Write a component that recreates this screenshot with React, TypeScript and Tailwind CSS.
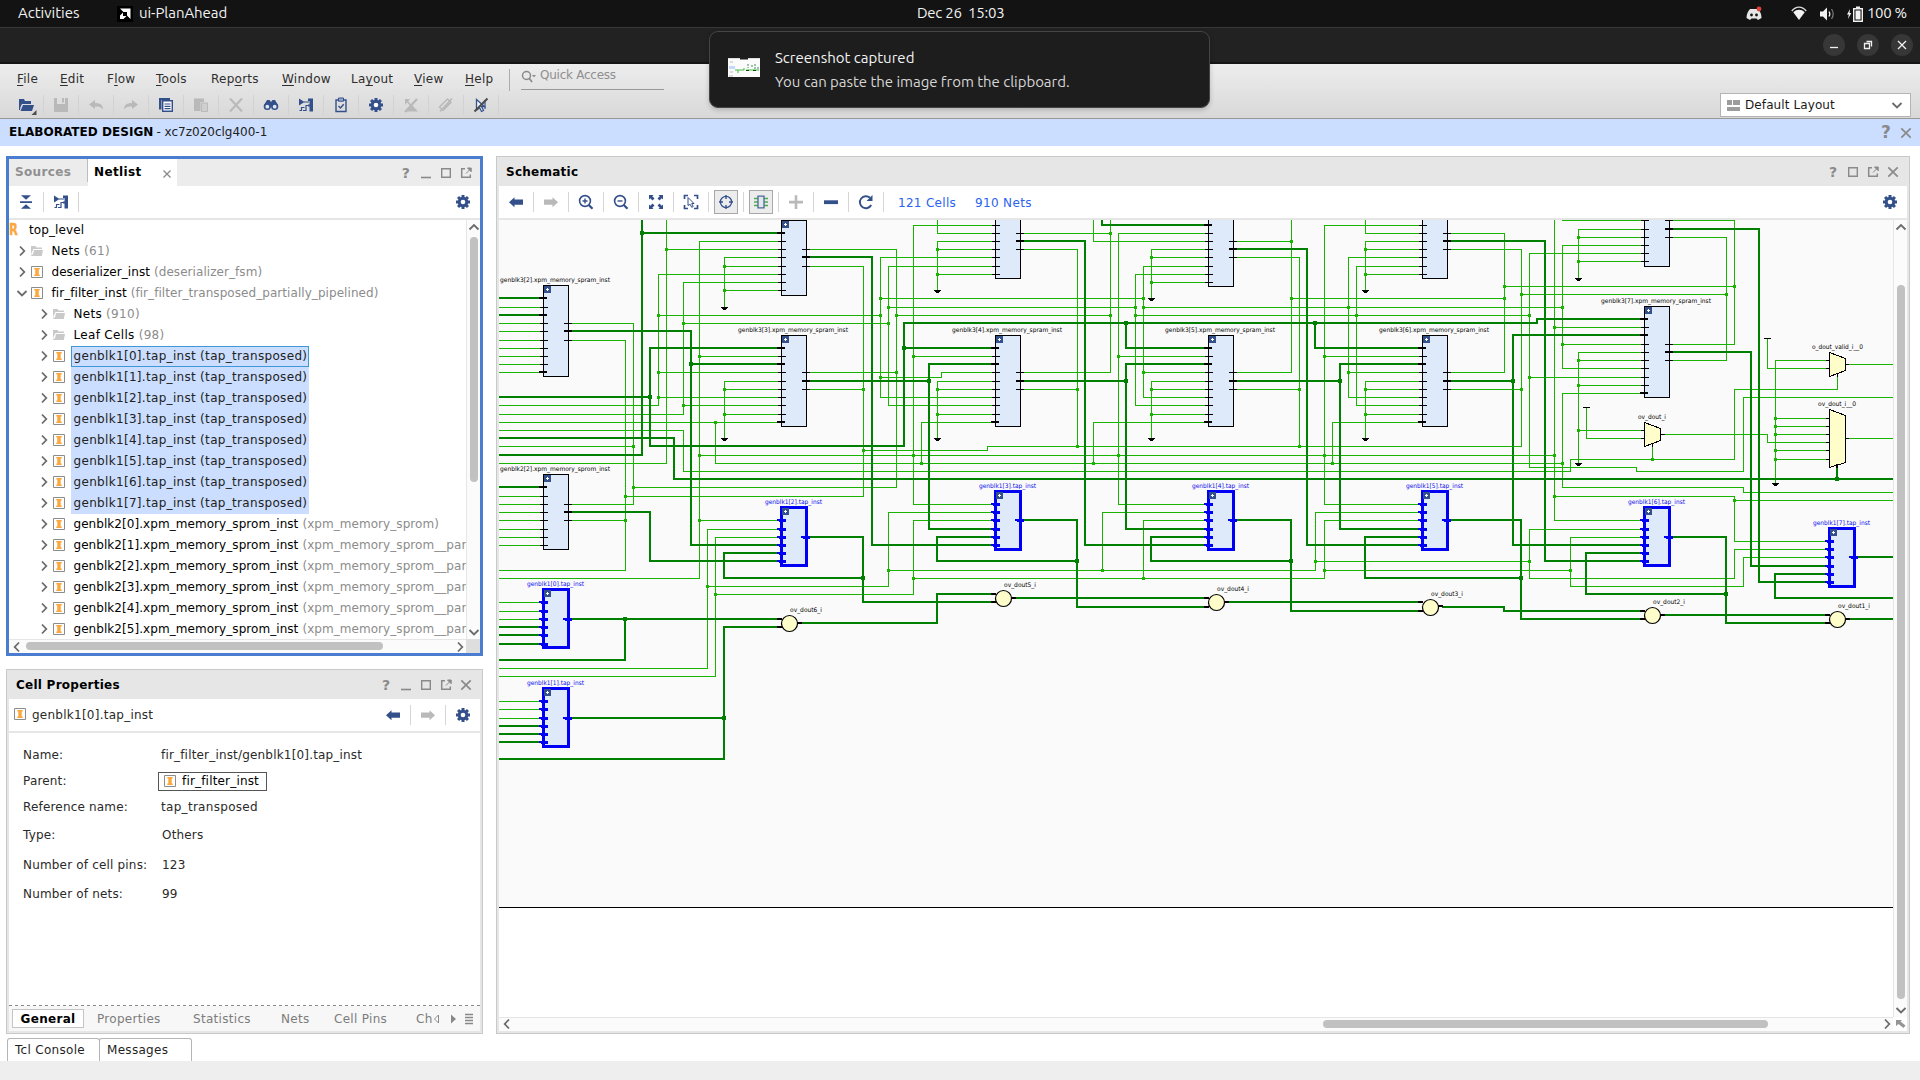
import React from "react";

const NAVY = "#34508a";
const OFF = "#b9b9b9";

type IconProps = { color?: string; className?: string };

function Svg({ children, className = "" }: { children: React.ReactNode; className?: string }) {
  return (
    <svg width="16" height="16" viewBox="0 0 16 16" className={"shrink-0 " + className}>
      {children}
    </svg>
  );
}

/* ---------- toolbar icons ---------- */

const FolderOpen = () => (
  <svg width="20" height="18" viewBox="0 0 20 18" className="ml-[3px] mt-1 shrink-0">
    <path d="M1 1h5l1 2h6v3H4L2.500 9 2 12H1z" fill={NAVY} />
    <path d="M5 7h11l-2 6H2.500z" fill={NAVY} />
    <path d="M18.500 12v5h-5z" fill="#4d4d4d" />
  </svg>
);
const Save = () => (
  <Svg>
    <path d="M1 1h3v6h8V1h3v14H1z" fill={OFF} />
    <path d="M9 1h2v4.500H9z" fill={OFF} />
  </Svg>
);
const Undo = ({ flip = false }: { flip?: boolean }) => (
  <Svg className={flip ? "-scale-x-100" : ""}>
    <path d="M1 7.500 7 3v3c5 0 8 2 8 6.500C13 10 11 9.500 7 9.500V12z" fill={OFF} />
  </Svg>
);
const Copy = () => (
  <Svg>
    <path d="M1 1h11v2H3.500v9.500H1z" fill={NAVY} />
    <path d="M4.700 3.700h9.600v10.600H4.700z" fill="#fff" stroke={NAVY} strokeWidth="1.400" />
    <path d="M6.500 7h6M6.500 9.300h6M6.500 11.600h6" stroke={NAVY} strokeWidth="1.200" />
  </Svg>
);
const Paste = () => (
  <Svg>
    <path d="M1 1.500h10V5H7.500v9H1z" fill={OFF} />
    <path d="M8.500 6h6v8.500h-6z" fill="#cfcfcf" stroke={OFF} strokeWidth="1" />
  </Svg>
);
const Cross = ({ color = OFF, className }: IconProps) => (
  <Svg className={className}>
    <path d="M2 1.500 14 14.500M14 1.500 2 14.500" stroke={color} strokeWidth="2" />
  </Svg>
);
const Binoculars = () => (
  <Svg>
    <path d="M4 3h2.500L8 5l1.500-2H12l3 5v2H1V8z" fill={NAVY} />
    <circle cx="4.300" cy="9.500" r="3.600" fill={NAVY} />
    <circle cx="11.700" cy="9.500" r="3.600" fill={NAVY} />
    <circle cx="4.300" cy="9.700" r="1.900" fill="#dfe6f2" />
    <circle cx="11.700" cy="9.700" r="1.900" fill="#dfe6f2" />
  </Svg>
);
const Tree = () => (
  <Svg>
    <path d="M1 1.500 6.500 5 1 8.500z" fill={NAVY} />
    <path d="M6 5h5M1.500 13.500h2v-3h3M10 8.500H8v5H5" stroke={NAVY} strokeWidth="1.200" fill="none" />
    <path d="M11.500 1.500H15v13h-3.500v-5H10v-2h1.500V4H10V1.500z" fill={NAVY} />
  </Svg>
);
const Clipboard = () => (
  <Svg>
    <path d="M3 3h10v11.500H3z" fill="none" stroke={NAVY} strokeWidth="1.400" />
    <path d="M5.500 1h5v3.200h-5z" fill="#9aabca" stroke={NAVY} strokeWidth="1" />
    <path d="m5.500 9 2 2 3.200-3.800" fill="none" stroke={NAVY} strokeWidth="1.400" />
  </Svg>
);
const Gear = () => (
  <Svg>
    <g fill={NAVY}>
      <circle cx="8" cy="8" r="5.300" />
      <path d="M6.500 1h3v14h-3zM1 6.500h14v3H1z" />
      <path d="M6.500 1h3v14h-3zM1 6.500h14v3H1z" transform="rotate(45 8 8)" />
    </g>
    <circle cx="8" cy="8" r="2.300" fill="#fff" />
  </Svg>
);
const NoSelect = () => (
  <Svg>
    <path d="M2 2h5L2 8zM2 14.500h13L9 8z" fill={OFF} />
    <path d="M14 2 2 15" stroke={OFF} strokeWidth="2.200" />
    <path d="m4 4 6 7" stroke={OFF} strokeWidth="1.500" />
  </Svg>
);
const NoMark = () => (
  <Svg>
    <path d="m1.500 10 8-8 3 3-8 8zM5 13.500l8.500-8.500" fill="none" stroke={OFF} strokeWidth="1.400" />
    <path d="M14 1.500 2 14.500" stroke={OFF} strokeWidth="1.600" />
  </Svg>
);
const NoCursor = () => (
  <Svg>
    <path d="m3.500 2.500 8 7H8.500l2 4-2 1-2-4-3 2z" fill="#eef2f8" stroke={NAVY} strokeWidth="1.300" />
    <path d="M12 3v9M4 13l2-2" stroke={NAVY} strokeWidth="1.200" />
    <path d="M14.500 1.500 1.500 14.500" stroke="#4b4b4b" strokeWidth="2" />
  </Svg>
);
const Collapse = () => (
  <Svg>
    <path d="M3 1.200h10L8 5.800zM3 14.800h10L8 10.200zM2 7.200h12v1.700H2z" fill={NAVY} />
  </Svg>
);
const ArrowIcon = ({ right = false }: { right?: boolean }) => (
  <Svg className={right ? "-scale-x-100" : ""}>
    <path d="M1 8.200 6.500 3.200v2.300H15v5.200H6.500v2.500z" fill={right ? OFF : NAVY} />
  </Svg>
);
const Zoom = ({ plus = false }: { plus?: boolean }) => (
  <Svg>
    <circle cx="7" cy="7" r="5.400" fill="#fff" stroke={NAVY} strokeWidth="1.600" />
    <path d={plus ? "M4.500 7h5M7 4.500v5" : "M4.500 7h5"} stroke={NAVY} strokeWidth="1.400" />
    <path d="m10.800 11 3.700 3.700" stroke={NAVY} strokeWidth="2.200" />
  </Svg>
);
const Fit = () => (
  <Svg>
    <path d="M1 1h4.500L4.300 2.200 6.500 4.500 4.500 6.500 2.300 4.300 1 5.500zM15 1v4.500l-1.300-1.200-2.200 2.200-2-2 2.200-2.300L10.500 1zM1 15v-4.500l1.300 1.200 2.200-2.200 2 2-2.200 2.300L5.500 15zM15 15h-4.500l1.200-1.200-2.200-2.300 2-2 2.200 2.200 1.300-1.200z" fill={NAVY} />
  </Svg>
);
const SelectArea = () => (
  <Svg>
    <path d="M1.500 5V1.500H5M11 1.500h3.500V5M14.500 11v3.500H11M5 14.500H1.500V11" fill="none" stroke={NAVY} strokeWidth="1.700" />
    <path d="m5 3.500 6 6H8.700l1.500 3-1.500.8-1.500-3L5 11.500z" fill="#fff" stroke={NAVY} strokeWidth="1" />
  </Svg>
);
const Target = () => (
  <Svg>
    <circle cx="8" cy="8" r="5.600" fill="none" stroke={NAVY} strokeWidth="1.300" />
    <path d="M8 1v4M8 11v4M1 8h4M11 8h4" stroke={NAVY} strokeWidth="1.400" />
  </Svg>
);
const Chip = () => (
  <Svg>
    <path d="M1 4.500h14M1 8h14M1 11.500h14" stroke="#47b04b" strokeWidth="1.700" />
    <path d="M5 2.200h6v11.600H5z" fill="#e3e8f0" stroke="#4f6796" strokeWidth="1.300" />
  </Svg>
);
const Plus = () => (
  <Svg>
    <path d="M1 6.800h14v2.600H1zM6.700 1.200h2.600V15H6.700z" fill={OFF} />
  </Svg>
);
const Minus = () => (
  <Svg>
    <path d="M1 6.300h14v3.800H1z" fill={NAVY} />
  </Svg>
);
const Refresh = () => (
  <Svg>
    <path d="M13.200 11A6 6 0 1 1 12 3.800" fill="none" stroke={NAVY} strokeWidth="1.900" />
    <path d="M14.500 1v6H8.500z" fill={NAVY} />
  </Svg>
);

/* ---------- window controls ---------- */

const HelpMark = ({ big = false }: { big?: boolean }) => (
  <span className={"w-5 text-center font-bold leading-none text-[#8a8a8a] " + (big ? "text-[17px]" : "text-[14px]")}>?</span>
);
const MinMark = () => (
  <svg width="20" height="12" viewBox="0 0 20 12"><path d="M5 10.500h10" stroke="#8a8a8a" strokeWidth="1.600" /></svg>
);
const MaxMark = () => (
  <svg width="20" height="12" viewBox="0 0 20 12"><path d="M5.700 1.700h8.600v8.600H5.700z" fill="none" stroke="#8a8a8a" strokeWidth="1.400" /></svg>
);
const PopMark = () => (
  <svg width="20" height="12" viewBox="0 0 20 12">
    <path d="M9 1.700H5.700v8.600h8.600V7.500" fill="none" stroke="#8a8a8a" strokeWidth="1.500" />
    <path d="M11.500 1h3.700v3.700zM10 6.500 14 2.500" stroke="#8a8a8a" strokeWidth="1" fill="#8a8a8a" />
  </svg>
);
const CloseMark = () => (
  <svg width="20" height="12" viewBox="0 0 20 12"><path d="m5.300 1.300 9.400 9.400M14.700 1.300l-9.400 9.400" stroke="#8a8a8a" strokeWidth="1.700" /></svg>
);
const Chevron = ({ dir, className = "" }: { dir: "up" | "down" | "left" | "right"; className?: string }) => {
  const d = {
    up: "M2.500 8.500 7 4l4.500 4.500",
    down: "M2.500 5 7 9.500 11.500 5",
    left: "M9 2.500 4.700 7 9 11.500",
    right: "M5 2.500 9.300 7 5 11.500",
  }[dir];
  return (
    <svg width="14" height="14" viewBox="0 0 14 14" className={"shrink-0 " + className}>
      <path d={d} fill="none" stroke="#6b6b6b" strokeWidth="1.800" />
    </svg>
  );
};

const Inst = () => (
  <svg width="12" height="12" viewBox="0 0 12 12" className="block shrink-0">
    <path d="M.5.5h11v11H.5z" fill="#fff" stroke="#8c8c8c" />
    <path d="M3.300 2h5.400v1.500H7.700v5h1V10H3.300V8.500h1v-5h-1z" fill="#fba73b" />
  </svg>
);
const Folder = () => (
  <svg width="12" height="12" viewBox="0 0 12 12" className="block shrink-0">
    <path d="M0 1h4.500l1 1.500H11V4H2.500L0 9z" fill="#c9c9c9" />
    <path d="M3 5h9l-1.200 6H.5L0 9.500h2z" fill="#c9c9c9" />
  </svg>
);

/* ---------- netlist tree ---------- */

type Row = { depth: number; kind: "folder" | "inst"; name: string; extra: string; open?: boolean; selected?: boolean; tight?: boolean };

const rows: Row[] = [
  { depth: 0, kind: "folder", name: "Nets", extra: "(61)" },
  { depth: 0, kind: "inst", name: "deserializer_inst", extra: "(deserializer_fsm)", tight: true },
  { depth: 0, kind: "inst", name: "fir_filter_inst", extra: "(fir_filter_transposed_partially_pipelined)", open: true, tight: true },
  { depth: 1, kind: "folder", name: "Nets", extra: "(910)" },
  { depth: 1, kind: "folder", name: "Leaf Cells", extra: "(98)" },
  ...[0, 1, 2, 3, 4, 5, 6, 7].map(
    (n): Row => ({ depth: 1, kind: "inst", name: `genblk1[${n}].tap_inst`, extra: "(tap_transposed)", selected: true })
  ),
  { depth: 1, kind: "inst", name: "genblk2[0].xpm_memory_sprom_inst", extra: "(xpm_memory_sprom)", tight: true },
  ...[1, 2, 3, 4, 5].map(
    (n): Row => ({ depth: 1, kind: "inst", name: `genblk2[${n}].xpm_memory_sprom_inst`, extra: "(xpm_memory_sprom__par", tight: true })
  ),
];

function TreeRow({ row, focused }: { row: Row; focused: boolean }) {
  return (
    <div className={"flex h-[21px] shrink-0 items-center whitespace-nowrap " + (row.depth ? "pl-[28px]" : "pl-[6px]")}>
      <Chevron dir={row.open ? "down" : "right"} className="mb-px mr-[2px]" />
      <span className="mb-px">{row.kind === "inst" ? <Inst /> : <Folder />}</span>
      <span
        className={
          "ml-[6px] flex h-[21px] items-center border pb-[2px] pl-[1.500px] " +
          (row.tight ? "tracking-[0.06px] " : "tracking-[0.32px] ") +
          (row.selected ? "w-[238px] bg-[#cbdeff] " : "") +
          (focused ? "border-[#3f97d8]" : "border-transparent")
        }
      >
        <span className={row.selected ? "text-[#222]" : "text-black"}>{row.name}</span>
        <span className={"ml-[4px] " + (row.selected ? "text-[#222]" : "text-[#8c8c8c]")}>{row.extra}</span>
      </span>
    </div>
  );
}

/* ---------- schematic ---------- */

// Polylines on the pixel grid, "x,y x,y ..."; single-pixel nets.
const thin = [
  "499,307 540,307", "499,323 540,323", "499,331 540,331", "499,340 540,340", "499,348 540,348", "499,356 540,356", "499,364 540,364", "499,372 540,372",
  "572,323 633,323 633,504 572,504", "572,340 625,340 625,570 499,570", "499,446 633,446",
  "666,220 666,463 499,463", "666,249 778,249",
  "778,241 699,241 699,578 499,578", "699,356 778,356", "699,520 778,520", "699,455 1554,455",
  "778,257 724,257 724,307", "724,266 778,266", "724,290 778,290",
  "778,274 658,274 658,405 499,405", "658,315 880,315", "658,372 778,372", "658,397 778,397",
  "778,282 683,282 683,414 499,414", "683,323 888,323", "683,405 778,405",
  "778,381 724,381 724,438", "724,389 778,389", "724,414 778,414",
  "499,422 778,422", "715,422 715,463 1562,463",
  "499,430 683,430 683,471 1570,471 1570,459 1734,459 1734,389 1837,389 1837,376",
  "810,249 896,249 896,487 633,487", "896,315 1110,315", "810,372 896,372",
  "810,266 863,266 863,496 625,496", "810,389 863,389", "863,450 987,450 987,446 1521,446 1521,249 1450,249",
  "992,257 880,257 880,397 992,397", "880,298 1143,298", "880,377 941,377 941,372 992,372",
  "992,266 888,266 888,405 992,405", "888,307 1135,307",
  "992,225 913,225 913,504 992,504", "913,356 992,356",
  "937,220 937,233 992,233", "992,241 937,241 937,290", "937,249 992,249", "937,274 992,274",
  "1024,233 1110,233", "1110,220 1110,372 1024,372", "1024,249 1077,249 1077,446", "1024,389 1077,389",
  "1093,220 1093,241 1205,241",
  "1205,233 1118,233 1118,504 1205,504", "1118,356 1205,356",
  "1205,249 1151,249 1151,298", "1151,257 1205,257", "1151,282 1205,282",
  "1205,266 1143,266 1143,397 1205,397", "1143,307 1562,307", "1143,372 1205,372",
  "1205,274 1135,274 1135,405 1205,405", "1135,315 1529,315",
  "992,422 921,422 921,463", "992,381 937,381 937,438", "937,389 992,389", "937,414 992,414",
  "1205,422 1093,422 1093,463", "1205,381 1151,381 1151,438", "1151,389 1205,389", "1151,414 1205,414",
  "1237,241 1291,241", "1291,220 1291,372 1237,372", "1291,298 1504,298", "1237,257 1299,257 1299,446", "1237,389 1299,389",
  "1419,225 1324,225 1324,504 1419,504", "1324,356 1419,356",
  "1365,220 1365,233 1419,233", "1419,241 1365,241 1365,290", "1365,249 1419,249", "1365,274 1419,274",
  "1419,257 1348,257 1348,397 1419,397", "1348,372 1419,372", "1419,266 1356,266 1356,405 1419,405",
  "1419,381 1365,381 1365,438", "1365,389 1419,389", "1365,414 1419,414", "1419,422 1332,422 1332,463",
  "1450,233 1504,233 1504,372 1450,372", "1504,286 1734,286", "1521,294 1726,294", "1450,389 1521,389",
  "1641,253 1529,253 1529,467 1636,467 1636,471 1743,471 1743,397 1893,397", "1529,377 1641,377",
  "1554,220 1554,520 1641,520", "1554,327 1641,327", "1554,496 1734,496 1734,541 1826,541", "1734,500 1893,500",
  "1562,220 1641,220", "1641,245 1562,245 1562,368 1641,368", "1562,344 1641,344",
  "1641,393 1562,393 1562,487 1743,487 1743,492 1893,492",
  "1641,229 1578,229 1578,278", "1578,237 1641,237", "1578,261 1641,261",
  "1641,352 1578,352 1578,463", "1578,360 1641,360", "1578,385 1641,385", "1578,430 1641,430",
  "1586,407 1586,438 1641,438",
  "1672,220 1734,220 1734,344 1672,344", "1672,237 1726,237 1726,360 1672,360",
  "1665,434 1767,434 1767,442 1826,442", "1652,447 1652,459",
  "1826,360 1775,360 1775,483", "1775,418 1826,418", "1775,426 1826,426", "1775,434 1826,434", "1775,450 1826,450", "1775,459 1826,459",
  "1826,368 1767,368 1767,338", "1849,364 1893,364", "1849,438 1893,438",
  "778,529 707,529 707,668 499,668", "707,586 888,586 888,512 992,512", "888,570 1315,570 1315,512 1419,512",
  "778,537 715,537 715,676 499,676", "715,594 913,594 913,520 992,520", "913,578 1324,578 1324,520 1419,520",
  "1205,512 1102,512 1102,570", "1205,520 1143,520 1143,578", "1315,561 1529,561", "1324,570 1570,570",
  "1641,529 1529,529 1529,578 1734,578 1734,549 1826,549", "1641,537 1570,537 1570,586 1743,586 1743,557 1826,557",
  "499,496 540,496", "499,504 540,504", "499,512 540,512", "499,520 540,520", "499,529 540,529", "499,537 540,537", "499,545 540,545", "572,520 625,520",
  "499,602 540,602", "499,611 540,611", "499,619 540,619", "499,701 540,701", "499,709 540,709", "499,718 540,718",
];

// Two-pixel buses.
const thick = [
  "499,298 540,298", "499,315 540,315", "572,331 691,331 691,545 778,545", "691,364 778,364",
  "642,220 642,455 499,455", "642,233 778,233", "499,397 650,397", "778,348 650,348 650,446 904,446 904,323 1537,323 1537,319 1641,319",
  "499,438 674,438 674,479 1893,479", "810,257 872,257 872,545 992,545",
  "904,348 992,348", "1126,323 1126,348 1205,348", "1315,323 1315,348 1419,348",
  "810,381 929,381", "992,364 929,364 929,529 992,529", "1024,241 1085,241 1085,545 1205,545",
  "1102,220 1102,225 1205,225", "1024,381 1126,381", "1205,364 1126,364 1126,529 1205,529",
  "1237,249 1307,249 1307,545 1419,545", "1237,381 1340,381", "1419,364 1340,364 1340,529 1419,529",
  "1450,241 1545,241 1545,561 1641,561", "1450,381 1513,381", "1641,335 1513,335 1513,545 1641,545",
  "1672,229 1759,229 1759,582 1826,582", "1672,352 1751,352 1751,566 1826,566", "1837,465 1837,479",
  "499,487 540,487", "572,512 650,512 650,561 778,561",
  "778,553 724,553 724,578 863,578", "808,537 863,537 863,602 992,602",
  "572,619 778,619", "625,619 625,660 499,660", "572,718 724,718", "778,627 724,627 724,759 499,759",
  "800,623 937,623 937,594 992,594", "1014,598 1205,598", "1227,602 1419,602", "1442,607 1504,607 1504,611 1641,611",
  "1664,615 1826,615", "1848,619 1893,619",
  "992,537 937,537 937,561 1077,561", "1022,520 1077,520 1077,607 1205,607",
  "1205,537 1151,537 1151,561 1291,561", "1236,520 1291,520 1291,611 1419,611",
  "1419,537 1365,537 1365,578 1521,578", "1450,520 1521,520 1521,619 1641,619",
  "1641,553 1586,553 1586,594 1726,594", "1672,537 1726,537 1726,623 1826,623",
  "1826,574 1775,574 1775,598 1893,598", "1856,557 1893,557",
  "499,627 540,627", "499,635 540,635", "499,644 540,644", "499,726 540,726", "499,734 540,734", "499,742 540,742",
];

const thinNodes =
  "633,446 633,487 625,496 625,520 666,249 699,356 699,455 699,520 724,266 724,290 658,315 658,372 658,397 683,323 683,405 724,389 724,414 715,422 " +
  "896,315 896,372 863,389 863,450 880,298 880,315 880,377 888,307 888,323 913,356 913,455 937,249 937,274 1110,233 1110,315 1077,389 1077,446 " +
  "1118,356 1118,455 1151,257 1151,282 1143,298 1143,307 1143,372 1135,307 1135,315 921,463 937,389 937,414 1093,463 1151,389 1151,414 1291,241 1291,298 " +
  "1299,389 1299,446 1324,356 1324,455 1365,249 1365,274 1348,307 1348,372 1356,315 1365,389 1365,414 1332,463 1504,286 1504,298 1521,294 1521,389 " +
  "1529,315 1529,377 1554,327 1554,455 1554,496 1562,307 1562,344 1562,463 1578,237 1578,261 1578,360 1578,385 1578,430 1734,286 1726,294 1652,459 " +
  "1775,418 1775,426 1775,434 1775,450 1775,459 1734,500 707,586 715,594 888,570 913,578 1102,570 1143,578 1315,561 1324,570 1529,561 1570,570";
const thickNodes =
  "642,233 691,364 650,397 904,348 929,381 1126,323 1126,381 1315,323 1340,381 1513,381 863,578 1077,561 1291,561 1521,578 1726,594 625,619 724,718 1837,479";

const pts = (s: string) => s.split(" ").map((p) => p.split(",").map(Number));

type Mem = { x: number; y: number; h: number; label?: string; l: number[]; lt: number[]; r: number[]; rt: number };
const full = { h: 91, lt: [348, 364, 422], l: [356, 372, 381, 389, 397, 405, 414], r: [372, 389], rt: 381 };
const mems: Mem[] = [
  { x: 543, y: 285, h: 91, label: "genblk3[2].xpm_memory_spram_inst", lt: [298, 315, 372], l: [307, 323, 331, 340, 348, 356, 364], r: [323, 340], rt: 331 },
  { x: 781, y: 220, h: 75, lt: [233], l: [241, 249, 257, 266, 274, 282, 290], r: [249, 266], rt: 257 },
  { x: 781, y: 335, label: "genblk3[3].xpm_memory_spram_inst", ...full },
  { x: 543, y: 474, h: 75, label: "genblk2[2].xpm_memory_sprom_inst", lt: [487], l: [496, 504, 512, 520, 529, 537, 545], r: [504, 520], rt: 512 },
  { x: 995, y: 203, h: 75, lt: [], l: [225, 233, 241, 249, 257, 266, 274], r: [233, 249], rt: 241 },
  { x: 995, y: 335, label: "genblk3[4].xpm_memory_spram_inst", ...full },
  { x: 1208, y: 211, h: 75, lt: [225], l: [233, 241, 249, 257, 266, 274, 282], r: [241, 257], rt: 249 },
  { x: 1208, y: 335, label: "genblk3[5].xpm_memory_spram_inst", ...full },
  { x: 1422, y: 203, h: 75, lt: [], l: [225, 233, 241, 249, 257, 266, 274], r: [233, 249], rt: 241 },
  { x: 1422, y: 335, label: "genblk3[6].xpm_memory_spram_inst", ...full },
  { x: 1644, y: 191, h: 75, lt: [], l: [220, 229, 237, 245, 253, 261], r: [220, 237], rt: 229 },
  { x: 1644, y: 306, h: 91, label: "genblk3[7].xpm_memory_spram_inst", lt: [319, 335, 393], l: [327, 344, 352, 360, 368, 377, 385], r: [344, 360], rt: 352 },
];

const taps = [
  { n: 0, x: 543, y: 589, l: [602, 611, 619, 627, 635, 644], r: 619 },
  { n: 1, x: 543, y: 688, l: [701, 709, 718, 726, 734, 742], r: 718 },
  { n: 2, x: 781, y: 507, l: [520, 529, 537, 545, 553, 561], r: 537 },
  { n: 3, x: 995, y: 491, l: [504, 512, 520, 529, 537, 545], r: 520 },
  { n: 4, x: 1208, y: 491, l: [504, 512, 520, 529, 537, 545], r: 520 },
  { n: 5, x: 1422, y: 491, l: [504, 512, 520, 529, 537, 545], r: 520 },
  { n: 6, x: 1644, y: 507, l: [520, 529, 537, 545, 553, 561], r: 537 },
  { n: 7, x: 1829, y: 528, l: [541, 549, 557, 566, 574, 582], r: 557 },
];

const adders = [
  { label: "ov_dout6_i", x: 789.5, y: 623.5, a: 619, b: 627 },
  { label: "ov_dout5_i", x: 1003.5, y: 598.5, a: 594, b: 602 },
  { label: "ov_dout4_i", x: 1216.5, y: 602.5, a: 598, b: 607 },
  { label: "ov_dout3_i", x: 1430.5, y: 607.5, a: 602, b: 611 },
  { label: "ov_dout2_i", x: 1652.5, y: 615.5, a: 611, b: 619 },
  { label: "ov_dout1_i", x: 1837.5, y: 619.5, a: 615, b: 623 },
];

const grounds = "724,307 724,438 937,290 937,438 1151,298 1151,438 1365,290 1365,438 1578,278 1578,463 1775,483";

function Label({ x, y, w, fill = "#000", children }: { x: number; y: number; w: number; fill?: string; children: string }) {
  return (
    <text x={x} y={y} fontSize="6.300" fontFamily="DejaVu Sans" textLength={w} lengthAdjust="spacingAndGlyphs" fill={fill}>
      {children}
    </text>
  );
}

function Expand({ x, y }: { x: number; y: number }) {
  return (
    <g>
      <rect x={x + 1} y={y + 1} width="7" height="7" fill="#34508a" />
      <path d={`M${x + 3} ${y + 4.5}h3M${x + 4.5} ${y + 3}v3`} stroke="#fff" />
    </g>
  );
}

function Schematic() {
  return (
    <svg width="1394" height="797" viewBox="499 220 1394 797" className="block" shapeRendering="crispEdges">
      <rect x="499" y="220" width="1394" height="687" fill="#fafafa" />
      <rect x="499" y="907" width="1394" height="1" fill="#000" />
      <g fill="none" stroke="#18b400" transform="translate(.5 .5)" strokeLinecap="square">
        {thin.map((p) => (
          <polyline key={p} points={p} />
        ))}
      </g>
      <g fill="none" stroke="#008000" strokeWidth="2">
        {thick.map((p) => (
          <polyline key={p} points={p} />
        ))}
      </g>
      {pts(thinNodes).map(([x, y]) => (
        <rect key={`${x}-${y}`} x={x - 1} y={y - 1} width="3" height="3" fill="#18b400" />
      ))}
      {pts(thickNodes).map(([x, y]) => (
        <rect key={`${x}-${y}`} x={x - 2} y={y - 2} width="4" height="4" fill="#008000" />
      ))}

      {mems.map((m) => (
        <g key={`${m.x}-${m.y}`}>
          <rect x={m.x + 0.5} y={m.y + 0.5} width="25" height={m.h} fill="#deeaf9" stroke="#000" />
          {m.l.map((y) => <rect key={y} x={m.x - 3} y={y} width="8" height="1" />)}
          {m.lt.map((y) => (
            <rect key={y} x={m.x - 4} y={y - 1} width="8" height="2" />
          ))}
          {m.r.map((y) => <rect key={y} x={m.x + 21} y={y} width="8" height="1" />)}
          <rect x={m.x + 21} y={m.rt - 1} width="8" height="2" />
          <Expand x={m.x} y={m.y} />
          {m.label && <Label x={m.x - 43} y={m.y - 3} w={110}>{m.label}</Label>}
        </g>
      ))}

      {taps.map((t) => (
        <g key={t.n}>
          <rect x={t.x + 0.5} y={t.y + 0.5} width="25" height="58" fill="#deeaf9" stroke="#0000f5" strokeWidth="3" />
          {t.l.map((y) => (
            <g key={y} fill="#0000f5">
              <rect x={t.x - 4} y={y - 1} width="8" height="2" />
              <rect x={t.x - 2} y={y - 1} width="7" height="3" />
            </g>
          ))}
          <rect x={t.x + 20} y={t.r - 1} width="8" height="2" fill="#0000f5" />
          <rect x={t.x + 22} y={t.r - 1} width="7" height="3" fill="#0000f5" />
          <Expand x={t.x} y={t.y} />
          <Label x={t.x - 16} y={t.y - 3} w={57} fill="#0a0aee">{`genblk1[${t.n}].tap_inst`}</Label>
        </g>
      ))}

      {adders.map((a) => (
        <g key={a.label}>
          <path d={`M${a.x - 12.5} ${a.a}h5M${a.x - 12.5} ${a.b}h5M${a.x + 7.5} ${a.a + 4}h5`} stroke="#000" strokeWidth="2" />
          <circle cx={a.x} cy={a.y} r="8" fill="#fffecb" stroke="#000" strokeWidth="1.200" shapeRendering="auto" />
          <Label x={a.x + 0.5} y={a.y - 11.5} w={32}>{a.label}</Label>
        </g>
      ))}

      {pts(grounds).map(([x, y]) => (
        <path key={`${x}-${y}`} d={`M${x - 3} ${y}h7v1h-1v1h-1v1h-3v-1h-1v-1h-1z`} />
      ))}

      <g fill="#fffecb" stroke="#000" strokeWidth="1">
        <path d="M1644.500 422.500 1660.500 428.500V440.500L1644.500 446.500z" />
        <path d="M1829.500 352.500 1845.500 358.500V370.500L1829.500 376.500z" />
        <path d="M1829.500 409.500 1845.500 415.500V462.500L1829.500 467.500z" />
        <path d="M1641 430.500h3M1641 438.500h3M1661 434.500h4M1652.500 444v3M1826 360.500h3M1826 368.500h3M1846 364.500h3M1837.500 374v3M1826 418.500h3M1826 426.500h3M1826 434.500h3M1826 442.500h3M1826 450.500h3M1826 459.500h3M1846 438.500h3M1583 407.500h7M1764 338.500h7" />
        <path d="M1837 464v4" strokeWidth="2" />
      </g>
      <Label x={1638} y={419} w={28}>ov_dout_i</Label>
      <Label x={1812} y={349} w={51}>o_dout_valid_i__0</Label>
      <Label x={1818} y={406} w={38}>ov_dout_i__0</Label>
    </svg>
  );
}

/* ---------- bars ---------- */

const menus = [
  { pre: "", key: "F", post: "ile", w: "w-[43px]" },
  { pre: "", key: "E", post: "dit", w: "w-[47px]" },
  { pre: "F", key: "l", post: "ow", w: "w-[49px]" },
  { pre: "", key: "T", post: "ools", w: "w-[55px]" },
  { pre: "Rep", key: "o", post: "rts", w: "w-[71px]" },
  { pre: "", key: "W", post: "indow", w: "w-[69px]" },
  { pre: "La", key: "y", post: "out", w: "w-[63px]" },
  { pre: "", key: "V", post: "iew", w: "w-[51px]" },
  { pre: "", key: "H", post: "elp", w: "w-[44px]" },
];

const mainTools = [FolderOpen, Save, Undo, () => <Undo flip />, Copy, Paste, Cross, Binoculars, Tree, Clipboard, Gear, NoSelect, NoMark, NoCursor];

const schTools: { icon: React.ReactNode; on?: boolean }[] = [
  { icon: <ArrowIcon /> },
  { icon: <ArrowIcon right /> },
  { icon: <Zoom plus /> },
  { icon: <Zoom /> },
  { icon: <Fit /> },
  { icon: <SelectArea /> },
  { icon: <Target />, on: true },
  { icon: <Chip />, on: true },
  { icon: <Plus /> },
  { icon: <Minus /> },
  { icon: <Refresh /> },
];

function DesktopBars() {
  return (
    <div className="font-['Ubuntu','Noto_Sans',sans-serif] text-[15px] text-[#f2f2f2]">
      <div className="flex h-[27px] items-center bg-[#131313]">
        <div className="flex w-[917px] shrink-0 items-center pl-[18px]">
          <span className="w-[99px]">Activities</span>
          <svg width="16" height="16" viewBox="0 0 16 16">
            <rect width="16" height="16" fill="#000" />
            <path d="M3 2.500h10.500V13L10 9.500V6H6.500zM3 9.500l3-3V10h3.500l-3 3H3z" fill="#fff" />
          </svg>
          <span className="ml-[6px] tracking-[-0.05px]">ui-PlanAhead</span>
        </div>
        <div className="w-[830px] shrink-0 whitespace-pre tracking-[-0.25px]">Dec 26  15:03</div>
        <svg width="16" height="16" viewBox="0 0 16 16" className="-ml-px mr-[37px] shrink-0">
          <path d="M4 3 12 3c2 2 3.500 5 3.500 9L12 14l-1.500-1.500h-5L4 14 .5 12C.5 8 2 5 4 3z" fill="#e6e6e6" />
          <circle cx="5.500" cy="9" r="1.400" fill="#131313" />
          <circle cx="10.500" cy="9" r="1.400" fill="#131313" />
          <circle cx="13" cy="3" r="2.400" fill="#e0403c" />
        </svg>
        <div className="-ml-[8px] flex items-center">
          <svg width="16" height="16" viewBox="0 0 16 16" className="mr-3 shrink-0">
            <path d="M.8 5C5-.2 11-.2 15.200 5" fill="none" stroke="#ddd" strokeWidth="1.300" />
            <path d="M2.300 6.300C5.500 3 10.500 3 13.700 6.300L8 14z" fill="#f2f2f2" />
          </svg>
          <svg width="16" height="16" viewBox="0 0 16 16" className="mr-[11px] shrink-0">
            <path d="M1 5.500h3L8 1.500v13L4 10.500H1z" fill="#f2f2f2" />
            <path d="M10 5.500c1 1.500 1 3.500 0 5" stroke="#f2f2f2" strokeWidth="1.300" fill="none" />
            <path d="M12.500 3c2 3 2 7 0 10" stroke="#777" strokeWidth="1.300" fill="none" />
          </svg>
          <svg width="18" height="18" viewBox="0 0 18 18" className="mr-[3px] shrink-0">
            <path d="M4 4 1 9.500h1.800L2 14l3.300-6H3.500z" fill="#f2f2f2" />
            <path d="M7.700 3.700h8.600v12.600H7.700z" fill="none" stroke="#f2f2f2" strokeWidth="1.400" />
            <path d="M9.500 5.500h5v9h-5zM10 1.500h4v2h-4z" fill="#f2f2f2" />
          </svg>
          <span className="whitespace-nowrap tracking-[-0.35px]">100 %</span>
        </div>
      </div>
      <div className="flex h-[37px] items-center justify-end gap-3 border-b-2 border-t border-b-[#161616] border-t-[#383838] bg-[#222] pr-[7px]">
        {["M7 13.500h8", "M7.500 9.500h5v5h-5zM9.500 7.500h5v5", "m7 7 8 8M15 7l-8 8"].map((d) => (
          <svg key={d} width="22" height="22" viewBox="0 0 22 22">
            <circle cx="11" cy="11" r="11" fill="#373737" />
            <path d={d} fill="none" stroke="#f0f0f0" strokeWidth="1.300" />
          </svg>
        ))}
      </div>
    </div>
  );
}

function Notification() {
  return (
    <div className="absolute left-[709px] top-[31px] flex h-[77px] w-[501px] items-center rounded-[9px] border border-[#454545] bg-[#1d1d1d] pl-[18px] font-['Ubuntu','Noto_Sans',sans-serif] text-[15px] text-[#f4f4f4] shadow-[0_2px_5px_rgba(0,0,0,0.2)]">
      <svg width="32" height="19" viewBox="0 0 32 19" className="mb-[5px] mr-[15px]">
        <rect width="32" height="19" fill="#fbfbfb" />
        <path d="M0 0h12v1H0zM20 0h12v1H20z" fill="#ddd" />
        <path d="M12 0h8v1.500h-8z" fill="#1d1d1d" />
        <path d="M1 8h6v3H1z" fill="#c4d9fb" />
        <path d="M2 4h3M2 14h3M1 18h4" stroke="#bbb" />
        <path d="M7 12h3M10 15v-3h6v-2M18 12h13" stroke="#46b946" fill="none" />
        <path d="M20 6v4M24 7v3M27 6v5M30 9v3" stroke="#3b8b5a" strokeDasharray="2 1" />
        <path d="M18 12.500h3M25 12.500h3" stroke="#064f06" />
      </svg>
      <div className="flex flex-col leading-6">
        <span>Screenshot captured</span>
        <span className="tracking-[-0.04px] text-[#d6d6d6]">You can paste the image from the clipboard.</span>
      </div>
    </div>
  );
}

function Divider() {
  return <div className="h-5 w-px shrink-0 bg-[#d6d6d6]" />;
}

function MenuArea() {
  return (
    <div className="flex h-[55px] justify-between border-b border-[#999] bg-linear-to-b from-[#ededed] to-[#d8d8d8]">
      <div>
        <div className="flex h-[28px] items-center">
          <div className="flex pl-[17px] pt-[2px] leading-4 tracking-[0.25px] text-[#2e2e2e]">
            {menus.map((m) => (
              <span key={m.key + m.post} className={m.w}>
                {m.pre}
                <span className="underline decoration-1 underline-offset-2">{m.key}</span>
                {m.post}
              </span>
            ))}
          </div>
          <div className="mt-[3px] h-[22px] w-px bg-[#adadad]" />
          <div className="ml-[11px] flex h-[23px] w-[143px] items-start border-b border-[#999] text-[#8f8f8f]">
            <svg width="16" height="14" viewBox="0 0 16 14" className="mr-[3px] mt-[3px]">
              <circle cx="5.500" cy="5.500" r="4" fill="none" stroke="#8a8a8a" strokeWidth="1.500" />
              <path d="m8 8 3 4" stroke="#8a8a8a" strokeWidth="1.700" />
              <path d="M11 5h4l-2 2.300z" fill="#8a8a8a" />
            </svg>
            <span className="leading-[17px] tracking-[-0.25px]">Quick Access</span>
          </div>
        </div>
        <div className="flex h-[26px] items-center pl-[9px]">
          {mainTools.map((Icon, i) => (
            <div key={i} className="flex h-5 w-[35px] items-center justify-center border-r border-[#d2d2d2]">
              <Icon />
            </div>
          ))}
        </div>
      </div>
      <div className="mr-[9px] mt-[29px] flex h-[24px] w-[191px] items-center border border-[#b4b4b4] bg-white pl-[6px] pr-[6px]">
        <svg width="13" height="11" viewBox="0 0 13 11">
          <path d="M0 0h5v5H0zM6 0h7v5H6zM0 7h13v4H0z" fill="#9c9c9c" />
        </svg>
        <span className="ml-[5px] grow tracking-[0.1px] text-[#1a1a1a]">Default Layout</span>
        <Chevron dir="down" />
      </div>
    </div>
  );
}

function NetlistPanel() {
  return (
    <div className="flex h-[500px] w-[477px] flex-col border-[3px] border-[#4a7ccf] bg-white">
      <div className="flex h-[27px] shrink-0 bg-[#ececec] text-[12px] font-bold tracking-[0.35px]">
        <div className="mb-1 w-[79px] border-r border-[#bdbdbd] pl-[6px] leading-[27px] text-[#909090]">Sources</div>
        <div className="flex w-[89px] items-center justify-between bg-white pl-[6px] pr-[6px] leading-[27px]">
          Netlist
          <svg width="8" height="8" viewBox="0 0 8 8" className="mt-[3px]">
            <path d="m.5.500 7 7M7.500.500l-7 7" stroke="#8a8a8a" strokeWidth="1.300" />
          </svg>
        </div>
        <div className="flex grow items-center justify-end pr-[4px]">
          <HelpMark /><MinMark /><MaxMark /><PopMark />
        </div>
      </div>
      <div className="flex h-[34px] shrink-0 items-center border-b-2 border-[#e6e6e6] pl-[9px] pr-[9px]">
        <Collapse />
        <div className="mx-[9px]"><Divider /></div>
        <Tree />
        <div className="ml-[9px] grow"><Divider /></div>
        <Gear />
      </div>
      <div className="flex min-h-0 grow">
        <div className="flex w-[457px] flex-col overflow-hidden">
          <div className="flex h-[21px] shrink-0 items-center pb-[2px]">
            <span className="w-5 text-[16px] font-bold leading-[19px] text-[#fba73b] [font-family:'DejaVu_Sans_Condensed','Liberation_Sans'] [-webkit-text-stroke:0.300px_#fba73b]">
              <span className="inline-block origin-left scale-x-[0.8]">R</span>
            </span>
            <span className="tracking-[0.1px]">top_level</span>
          </div>
          {rows.map((r, i) => (
            <TreeRow key={i} row={r} focused={i === 5} />
          ))}
        </div>
        <div className="flex w-[14px] flex-col items-center justify-between border-l border-[#e6e6e6] bg-[#fbfbfb]">
          <Chevron dir="up" className="mt-px" />
          <div className="mb-[143px] mt-0.5 w-2 grow rounded-full bg-[#c1c1c1]" />
          <Chevron dir="down" />
        </div>
      </div>
      <div className="flex h-[14px] shrink-0">
        <div className="flex w-[457px] items-center border-t border-[#e6e6e6] bg-[#fbfbfb]">
          <Chevron dir="left" className="ml-px mr-[2px]" />
          <div className="mb-px h-2 w-[357px] rounded-full bg-[#c1c1c1]" />
          <Chevron dir="right" className="-mr-px ml-auto" />
        </div>
        <div className="grow bg-[#dedede]" />
      </div>
    </div>
  );
}

function CellProperties() {
  return (
    <div className="mt-[13px] flex h-[365px] w-[477px] flex-col border border-[#c9c9c9] bg-[#e6e6e6] px-0.5 pb-0.5">
      <div className="flex h-[29px] shrink-0 items-center justify-between pl-[7px] pr-[4px]">
        <span className="font-bold tracking-[0.25px]">Cell Properties</span>
        <div className="flex items-center">
          <HelpMark /><MinMark /><MaxMark /><PopMark /><CloseMark />
        </div>
      </div>
      <div className="flex grow flex-col bg-white text-[#2a2a2a]">
        <div className="flex h-[34px] shrink-0 items-center border-b-2 border-[#e6e6e6] pl-[5px] pr-[9px]">
          <span className="mb-[2px]"><Inst /></span>
          <span className="ml-[6px] grow tracking-[0.25px]">genblk1[0].tap_inst</span>
          <ArrowIcon />
          <div className="mx-[9px]"><Divider /></div>
          <ArrowIcon right />
          <div className="mx-[9px]"><Divider /></div>
          <Gear />
        </div>
        <div className="grid grow grid-cols-[138px_1fr] grid-rows-[26px_26px_26px_30px_29px_29px] content-start items-center pl-[14px] pt-[9px] leading-[20px] tracking-[0.18px]">
          <span>Name:</span>
          <span>fir_filter_inst/genblk1[0].tap_inst</span>
          <span>Parent:</span>
          <span className="-ml-[3px] flex h-[19px] w-[109px] items-center border border-[#555] pl-[5px]">
            <Inst />
            <span className="ml-[6px] text-black">fir_filter_inst</span>
          </span>
          <span>Reference name:</span>
          <span className="tracking-[0.3px]">tap_transposed</span>
          <span>Type:</span>
          <span className="pl-px">Others</span>
          <span>Number of cell pins:</span>
          <span className="pl-px">123</span>
          <span>Number of nets:</span>
          <span className="pl-px">99</span>
        </div>
        <svg width="471" height="1" className="block">
          <path d="M0 .5h471" stroke="#8a8a8a" strokeDasharray="3 3" />
        </svg>
        <div className="flex h-[25px] shrink-0 items-center bg-[#f7f7f7] pl-[3px] tracking-[0.3px] text-[#7c7c7c]">
          <span className="flex h-[19px] w-[72px] items-center justify-center border border-[#c4c4c4] bg-white font-bold text-black">General</span>
          <span className="ml-[13px] w-[96px]">Properties</span>
          <span className="w-[88px]">Statistics</span>
          <span className="w-[53px]">Nets</span>
          <span className="w-[82px]">Cell Pins</span>
          <span className="w-[17px]">Ch</span>
          <svg width="42" height="12" viewBox="0 0 42 12">
            <path d="M5.500 2v8L1.500 6z" fill="#fff" stroke="#888" />
            <path d="M18 1.500v9L23 6z" fill="#888" />
            <path d="M32 1.500h8M32 4.500h8M32 7.500h8M32 10.500h8" stroke="#888" strokeWidth="1.400" />
          </svg>
        </div>
      </div>
    </div>
  );
}

function SchematicPanel() {
  return (
    <div className="flex h-[878px] w-[1414px] flex-col border border-[#c9c9c9] bg-[#e6e6e6] px-0.5">
      <div className="flex h-[29px] shrink-0 items-center justify-between pl-[7px] pr-[4px]">
        <span className="font-bold tracking-[0.25px]">Schematic</span>
        <div className="flex items-center">
          <HelpMark /><MaxMark /><PopMark /><CloseMark />
        </div>
      </div>
      <div className="flex h-[34px] shrink-0 items-center border-b-2 border-[#e6e6e6] bg-white pr-[9px]">
        {schTools.map((t, i) => (
          <React.Fragment key={i}>
            <div className="flex w-[34px] justify-center">
              <div className={"flex size-6 items-center justify-center border " + (t.on ? "border-[#a8a8a8] bg-[#ececec]" : "border-transparent")}>
                {t.icon}
              </div>
            </div>
            <Divider />
          </React.Fragment>
        ))}
        <span className="ml-[14px] mt-px w-[77px] tracking-[0.3px] text-[#2a63ee]">121 Cells</span>
        <span className="mt-px grow tracking-[0.35px] text-[#2a63ee]">910 Nets</span>
        <Gear />
      </div>
      <div className="flex h-[797px] bg-white">
        <Schematic />
        <div className="flex w-[14px] flex-col items-center border-l border-[#e6e6e6] bg-[#fbfbfb]">
          <Chevron dir="up" className="mt-px" />
          <div className="mb-1 mt-[50px] w-2 grow rounded-full bg-[#c1c1c1]" />
          <Chevron dir="down" />
        </div>
      </div>
      <div className="flex h-[14px] w-[1408px]">
        <div className="flex w-[1394px] items-center border-t border-[#e6e6e6] bg-[#fbfbfb] pb-px">
          <Chevron dir="left" className="ml-px" />
          <div className="ml-[809px] h-2 w-[445px] rounded-full bg-[#c1c1c1]" />
          <Chevron dir="right" className="-mr-px ml-auto" />
        </div>
        <svg width="14" height="14" viewBox="0 0 14 14">
          <rect width="14" height="14" fill="#fff" />
          <path d="M3 3h6L7.500 4.500l5 4-2 2.500L5.500 7 3 9z" fill="#949494" />
        </svg>
      </div>
    </div>
  );
}

export default function App() {
  return (
    <div className="relative flex h-[1080px] w-[1920px] flex-col overflow-hidden bg-white text-[12px] text-black [font-family:'DejaVu_Sans',sans-serif]">
      <DesktopBars />
      <Notification />
      <MenuArea />
      <div className="flex h-[27px] shrink-0 items-center bg-[#cbdeff] pl-[9px] pr-1">
        <span className="mb-[2px] font-bold tracking-[0.04px]">ELABORATED DESIGN</span>
        <span className="mb-[2px] ml-[3px] grow text-[#222]">- xc7z020clg400-1</span>
        <HelpMark big />
        <CloseMark />
      </div>
      <div className="flex h-[915px] gap-[13px] pl-[6px] pt-[10px]">
        <div className="w-[477px]">
          <NetlistPanel />
          <CellProperties />
          <div className="mt-1 flex h-[23px] pl-px leading-[22px] tracking-[0.3px] text-[#1f1f1f]">
            <div className="w-[93px] rounded-t-[3px] border border-b-0 border-[#b5b5b5] pl-[7px]">Tcl Console</div>
            <div className="-ml-px w-[93px] rounded-t-[3px] border border-b-0 border-[#b5b5b5] pl-[7px]">Messages</div>
          </div>
        </div>
        <SchematicPanel />
      </div>
      <div className="h-[19px] shrink-0 bg-[#eee]" />
    </div>
  );
}
